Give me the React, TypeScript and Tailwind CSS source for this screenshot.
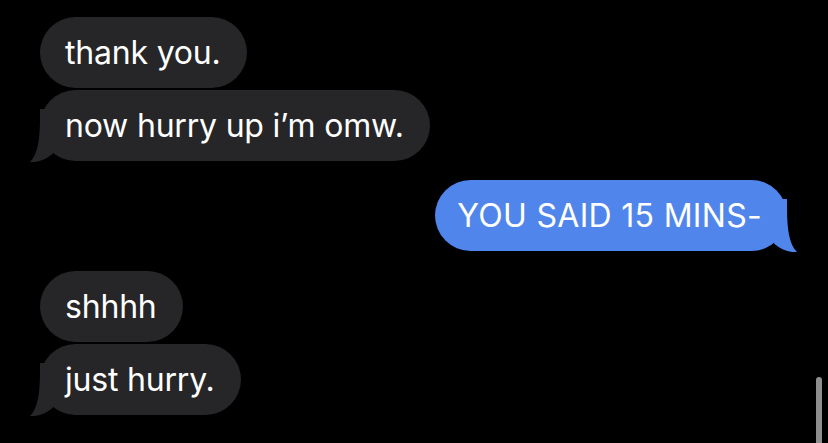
function LeftTail({ color }: { color: string }) {
  return (
    <svg className="pointer-events-none absolute -left-[12px] -bottom-[2px]" width="40" height="54" viewBox="0 0 40 54">
      <path d="M12 0 L12 8 C12 30 10 45 2 53 C10 53.6 19 50 25 44.5 L25 0 Z" fill={color} />
    </svg>
  );
}

function RightTail({ color }: { color: string }) {
  return (
    <svg className="pointer-events-none absolute -right-[12px] -bottom-[2px]" width="40" height="54" viewBox="0 0 40 54">
      <path d="M28 0 L28 8 C28 30 30 45 38 53 C30 53.6 21 50 15 44.5 L15 0 Z" fill={color} />
    </svg>
  );
}

function Received({ text, tail }: { text: string; tail?: boolean }) {
  return (
    <div className="relative flex h-[71px] w-fit items-center rounded-[36px] bg-[#262628] pl-[25px] pr-[26px]">
      <span className="whitespace-nowrap">{text}</span>
      {tail && <LeftTail color="#262628" />}
    </div>
  );
}

function Sent({ text }: { text: string }) {
  return (
    <div className="relative mr-[41px] flex h-[71px] w-fit items-center self-end rounded-[36px] bg-[#5086ec] pl-[22px] pr-[25px]">
      <span className="whitespace-nowrap tracking-[0.3px]">{text}</span>
      <RightTail color="#5086ec" />
    </div>
  );
}

export default function App() {
  return (
    <div className="relative h-[443px] w-[828px] overflow-hidden bg-black font-['Inter',sans-serif] text-[32px] tracking-[-0.2px] text-white">
      <div className="flex flex-col pl-[40px] pt-[17px]">
        <div className="flex flex-col gap-[2px]">
          <Received text="thank you." />
          <Received text="now hurry up i’m omw." tail />
        </div>
        <div className="mt-[19px] flex flex-col">
          <Sent text="YOU SAID 15 MINS-" />
        </div>
        <div className="mt-[20px] flex flex-col gap-[2px]">
          <Received text="shhhh" />
          <Received text="just hurry." tail />
        </div>
      </div>
      <div className="absolute right-[6px] bottom-0 h-[66px] w-[6px] rounded-t-full bg-[#8e8e8e]" />
    </div>
  );
}
